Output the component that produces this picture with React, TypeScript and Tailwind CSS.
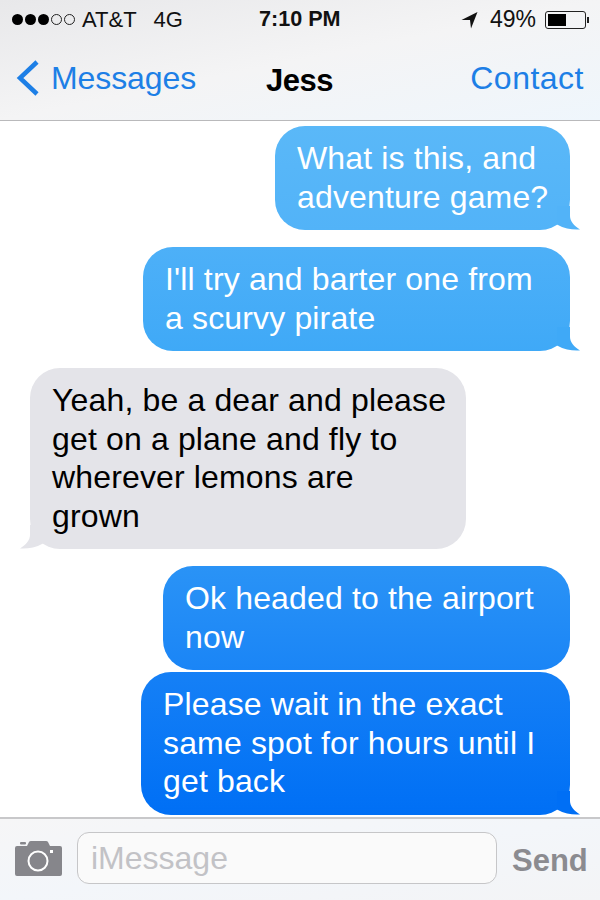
import React from "react";

const font = "font-['Liberation_Sans',Arial,sans-serif]";

const Tail = ({ color, left }: { color: string; left?: boolean }) => (
  <svg
    className={left ? "absolute left-[-10px] bottom-0 -scale-x-100" : "absolute right-[-10px] bottom-0"}
    width="28"
    height="24"
    viewBox="0 0 28 24"
  >
    <path d="M18 0 V10 C18 15 22 20 28 23.500 C21 24 13 23 5 18.500 L5 0 Z" fill={color} />
  </svg>
);

const Bubble = ({ lines, className, tail }: { lines: string[]; className: string; tail?: string }) => (
  <div className={`relative self-end rounded-[30px] px-[22px] pt-[13px] pb-[14px] text-[32px] tracking-[0.15px] leading-[38.500px] text-white ${className}`}>
    {lines.map((l) => (
      <div key={l} className="whitespace-nowrap">{l}</div>
    ))}
    {tail && <Tail color={tail} />}
  </div>
);

const CameraIcon = () => (
  <svg width="47" height="35" viewBox="0 0 47 35">
    <path d="M0 7 Q0 5 2 5 H12 L14 1 Q14.500 0 16 0 H31 Q32.500 0 33 1 L35 5 H45 Q47 5 47 7 V33 Q47 35 45 35 H2 Q0 35 0 33 Z" fill="#86868b" />
    <rect x="5" y="1" width="6" height="2.500" rx="1" fill="#86868b" />
    <circle cx="23" cy="20" r="9.500" fill="none" stroke="#ffffff" strokeWidth="2" />
    <rect x="35" y="9" width="3" height="3" fill="#ffffff" />
  </svg>
);

const App = () => {
  return (
    <div className={`w-[600px] h-[900px] flex flex-col bg-white overflow-hidden ${font}`}>
      <div className="h-[121px] border-b border-[#b9b9bb] bg-gradient-to-br from-[#e8e8ea] via-[#f4f4f5] to-[#eff6fc] flex flex-col">
        <div className="h-[39px] flex items-center pl-[12px] pr-[9px] text-[22px] text-[#111] relative">
          <div className="flex items-center gap-[2px]">
            {[0, 1, 2].map((i) => (
              <span key={i} className="w-[11px] h-[11px] rounded-full bg-black" />
            ))}
            {[0, 1].map((i) => (
              <span key={i} className="w-[11px] h-[11px] rounded-full border border-[#222]" />
            ))}
          </div>
          <span className="ml-[7px]">AT&amp;T</span>
          <span className="ml-[17px]">4G</span>
          <span className="absolute left-[259px] font-bold text-[21.600px]">7:10 PM</span>
          <div className="ml-auto flex items-center">
            <svg width="17" height="18" viewBox="0 0 17 18">
              <path d="M0.500 9 L16.500 1 L10 17.500 L9 9 Z" fill="#111" />
            </svg>
            <span className="ml-[12px] text-[23px]">49%</span>
            <div className="ml-[9px] w-[41px] h-[18px] rounded-[3px] border border-[#222] p-[2px] flex">
              <div className="w-[18px] bg-black" />
            </div>
            <div className="w-[2px] h-[6px] bg-[#222] ml-[1px] mr-[2px]" />
          </div>
        </div>
        <div className="flex-1 flex items-center pb-[3px] pl-[16px] pr-[16px] relative">
          <svg width="24" height="38" viewBox="0 0 24 38">
            <path d="M21 3 L4 19 L21 35" fill="none" stroke="#1d7fe6" strokeWidth="4.500" />
          </svg>
          <span className="ml-[11px] text-[32px] tracking-[-0.1px] text-[#1d7fe6]">Messages</span>
          <span className="absolute left-[266px] top-[19px] text-[31px] font-bold text-black tracking-[-0.5px]">Jess</span>
          <span className="ml-auto text-[32px] tracking-[0.5px] text-[#1d7fe6]">Contact</span>
        </div>
      </div>

      <div className="flex-1 flex flex-col pt-[5px] pl-[30px] pr-[30px]">
        <Bubble lines={["What is this, and", "adventure game?"]} className="w-[295px] mb-[17px] bg-gradient-to-b from-[#5ab8f8] to-[#52b3f8]" tail="#52b3f8" />
        <Bubble lines={["I'll try and barter one from", "a scurvy pirate"]} className="w-[427px] mb-[17px] bg-gradient-to-b from-[#4db0f8] to-[#3fa9f7]" tail="#3fa9f7" />
        <div className="relative w-[436px] mb-[17px] rounded-[30px] bg-[#e4e4e9] px-[22px] pt-[13px] pb-[14px] text-[32px] tracking-[0.15px] leading-[38.500px] text-black">
          {["Yeah, be a dear and please", "get on a plane and fly to", "wherever lemons are", "grown"].map((l) => (
            <div key={l} className="whitespace-nowrap">{l}</div>
          ))}
          <Tail color="#e4e4e9" left />
        </div>
        <Bubble lines={["Ok headed to the airport", "now"]} className="w-[407px] mb-[2px] bg-gradient-to-b from-[#2a93f6] to-[#1a85f6]" />
        <Bubble lines={["Please wait in the exact", "same spot for hours until I", "get back"]} className="w-[429px] bg-gradient-to-b from-[#1580f6] to-[#006ff5]" tail="#006ff5" />
      </div>

      <div className="h-[83px] border-t-2 border-[#c8c8ca] bg-gradient-to-br from-[#f6f6f7] via-[#f3f6fa] to-[#f3f4f6] flex items-start pl-[15px]">
        <div className="mt-[22px]">
          <CameraIcon />
        </div>
        <div className="ml-[15px] mt-[13px] w-[420px] h-[52px] rounded-[12px] border border-[#c6c6c8] bg-[#fafafa] flex items-center pl-[13px] text-[32px] text-[#c2c2c6]">
          iMessage
        </div>
        <span className="ml-[15px] mt-[19px] text-[31px] font-bold text-[#8b8b90]">Send</span>
      </div>
    </div>
  );
};

export default App;
